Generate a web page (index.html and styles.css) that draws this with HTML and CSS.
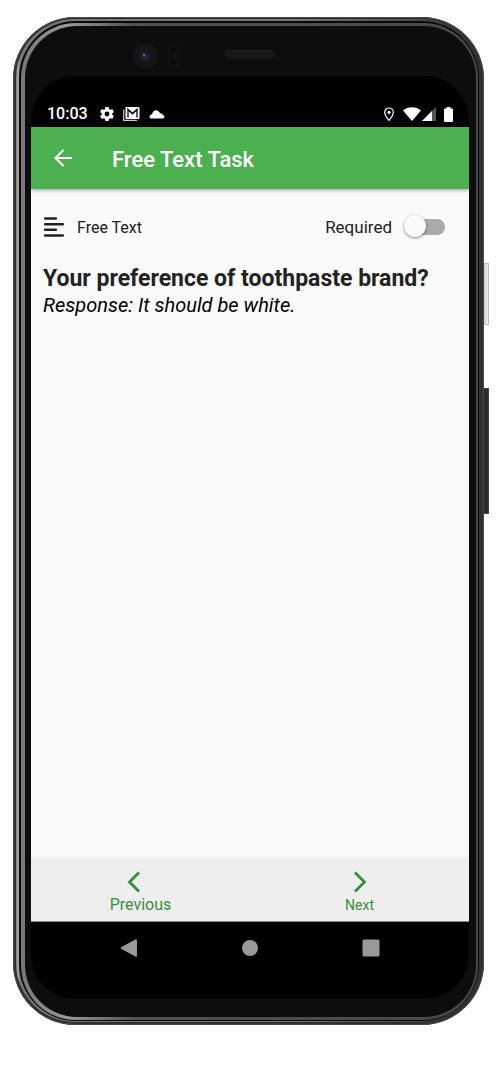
FILE: index.html
```html
<!DOCTYPE html>
<html lang="en">
<head>
<meta charset="utf-8">
<meta name="viewport" content="width=device-width, initial-scale=1">
<title>Free Text Task</title>
<link rel="stylesheet" href="styles.css">
</head>
<body>
<main class="phone">
  <span class="side-key power"></span>
  <span class="side-key volume"></span>
  <div class="ring edge"><div class="ring shine"><div class="ring groove"><div class="ring lip">
    <div class="bezel">
      <div class="sensors">
        <svg class="camera" width="48" height="26" viewBox="0 0 48 26" aria-hidden="true">
          <circle cx="13" cy="13" r="12.500" fill="#151516"/>
          <circle cx="13" cy="13" r="6" fill="#1a1a1f"/>
          <circle cx="14" cy="14" r="3.500" fill="#20243a"/>
          <circle cx="12" cy="12" r="1" fill="#888"/>
          <rect x="36" y="1" width="11" height="24" rx="5.500" fill="#111112"/>
          <circle cx="41.500" cy="7" r="3" fill="#0c0c0d"/>
          <circle cx="41.500" cy="19" r="3" fill="#0c0c0d"/>
        </svg>
        <span class="speaker"></span>
      </div>
      <div class="screen">
        <div class="status">
          <span class="clock">10:03</span>
          <svg class="gear" width="14" height="14" viewBox="2 2 20 20" aria-hidden="true"><path fill="#fff" d="M19.430 12.980c.040-.320.070-.640.070-.980s-.030-.660-.070-.980l2.110-1.650c.190-.150.240-.420.120-.640l-2-3.460c-.120-.220-.390-.300-.610-.220l-2.490 1c-.520-.400-1.080-.730-1.690-.980l-.380-2.650C14.460 2.180 14.250 2 14 2h-4c-.250 0-.460.180-.490.420l-.380 2.650c-.610.250-1.170.590-1.690.980l-2.490-1c-.230-.090-.490 0-.610.220l-2 3.460c-.130.220-.070.490.120.640l2.110 1.650c-.040.320-.070.650-.070.980s.030.660.070.980l-2.110 1.650c-.190.150-.240.420-.120.640l2 3.460c.120.220.390.300.610.220l2.490-1c.520.400 1.080.730 1.690.980l.380 2.650c.030.240.240.420.490.420h4c.250 0 .460-.180.490-.420l.380-2.650c.610-.250 1.170-.590 1.690-.980l2.490 1c.230.090.490 0 .610-.220l2-3.460c.120-.220.070-.490-.120-.640l-2.110-1.650zM12 15.500a3.500 3.500 0 1 1 0-7 3.500 3.500 0 0 1 0 7z"/></svg>
          <svg class="mail" width="17" height="14" viewBox="0 0 17 14" aria-hidden="true"><path d="M.700 2.500v10.800H14" fill="none" stroke="#ccc" stroke-width="1.200"/><rect x="2.500" width="14" height="12" rx="1" fill="#fff"/><path d="M5 10.500V2.800l4.500 4 4.500-4v7.700" fill="none" stroke="#000" stroke-width="1.300"/><path d="M4 1.200l5.500 4.300L15 1.200" fill="none" stroke="#000" stroke-width=".600"/></svg>
          <svg class="cloud" width="16" height="10" viewBox="0 0 16 10" aria-hidden="true"><path d="M2.500 9.500C-.500 9.500 0 5.500 3 5.200 4 .200 9.300-.200 11 4.200c2 0 2.600.800 2.800 1.800 2.200.300 2.100 3.500 0 3.500z" fill="#fff"/></svg>
          <svg class="pin" width="12" height="15" viewBox="0 0 12 15" aria-hidden="true"><path d="M6 1a4.300 4.300 0 0 0-4.300 4.300C1.700 8.500 6 13.400 6 13.400s4.300-4.900 4.300-8.100A4.300 4.300 0 0 0 6 1z" fill="none" stroke="#fff" stroke-width="1.200"/><circle cx="6" cy="5.300" r="1.600" fill="#fff"/></svg>
          <svg class="wifi" width="18" height="14" viewBox="0 0 18 14" aria-hidden="true"><path d="M0 3.400C5-.700 13-.700 18 3.400L9 14z" fill="#fff"/></svg>
          <svg class="signal" width="14" height="14" viewBox="0 0 14 14" aria-hidden="true"><path d="M0 14 14 0v14z" fill="#555"/><path d="M0 14 10 4v10z" fill="#fff"/></svg>
          <svg class="battery" width="9" height="15" viewBox="0 0 9 15" aria-hidden="true"><path d="M2.500 1.500V0h4v1.500H8a1 1 0 0 1 1 1V14a1 1 0 0 1-1 1H1a1 1 0 0 1-1-1V2.500a1 1 0 0 1 1-1z" fill="#fff"/></svg>
        </div>
        <header class="appbar">
          <button class="back" type="button" aria-label="Back"><svg width="18" height="18" viewBox="0 0 18 18" aria-hidden="true"><path d="M18 9H1.500M9.500 1 1.500 9l8 8" fill="none" stroke="#fff" stroke-width="2"/></svg></button>
          <h1 class="title">Free Text Task</h1>
        </header>
        <section class="content">
          <div class="meta">
            <svg width="21" height="20" viewBox="0 0 21 20" aria-hidden="true"><path d="M2.200 1.500h10.600M2.200 7.200h17.600M2.200 12.800h10.600M2.200 18.500h17.600" stroke="#222" stroke-width="2.600" stroke-linecap="round"/></svg>
            <span class="kind">Free Text</span>
            <label class="required">Required <input class="switch" type="checkbox" role="switch"></label>
          </div>
          <h2 class="question">Your preference of toothpaste brand?</h2>
          <p class="response">Response: It should be white.</p>
        </section>
        <nav class="pager" aria-label="Questions">
          <button class="page-link" type="button"><svg class="prev-icon" width="14" height="22" viewBox="0 0 14 22" aria-hidden="true"><path d="M12 1.500 2.500 11l9.500 9.500" fill="none" stroke="#388e3c" stroke-width="2.800"/></svg><span class="large">Previous</span></button>
          <button class="page-link" type="button"><svg width="14" height="22" viewBox="0 0 14 22" aria-hidden="true"><path d="M2 1.500 11.500 11 2 20.500" fill="none" stroke="#388e3c" stroke-width="2.800"/></svg><span>Next</span></button>
        </nav>
        <div class="system">
          <button class="key" type="button" aria-label="Back"><svg width="18" height="18" viewBox="0 0 18 18"><path d="M16.200 1v16L1.500 9z" fill="#999" stroke="#999" stroke-width="1.500" stroke-linejoin="round"/></svg></button>
          <button class="key" type="button" aria-label="Home"><svg width="18" height="18" viewBox="0 0 18 18"><circle cx="9" cy="9" r="8" fill="#999"/></svg></button>
          <button class="key" type="button" aria-label="Recent apps"><svg width="18" height="18" viewBox="0 0 18 18"><rect x=".500" y=".500" width="17" height="17" rx="1.500" fill="#999"/></svg></button>
        </div>
      </div>
    </div>
  </div></div></div></div>
</main>
</body>
</html>
```
FILE: styles.css
```css
* { box-sizing: border-box; }
body {
  margin: 0;
  min-height: 100vh;
  padding: 17px 16px 50px 13px;
  display: flex;
  background: #fff;
  font-family: Roboto, sans-serif;
}
button { border: 0; padding: 0; background: none; font: inherit; color: inherit; }
svg { display: block; flex: none; }
.phone { flex: 1; position: relative; display: flex; }
.side-key { position: absolute; right: -5px; width: 6px; border: 1px solid #bbb; }
.power { top: 246px; height: 62px; background: linear-gradient(90deg, #ccc, #eee); }
.volume { top: 371px; height: 126px; background: #2b2b2b; border-color: #444; }

/* Metal frame, from the outside in */
.ring { flex: 1; display: flex; position: relative; }
.edge { padding: 2px 4px 3px 3px; border-radius: 62px; background: #303030; box-shadow: inset 0 0 0 1px #484848; }
.shine { padding: 2px 1px 1px 3px; border-radius: 59px; background: linear-gradient(90deg, #777, #aaa 2px, #777 4px, #777 60%, #333); }
.groove { padding: 2px 1px 1px 2px; border-radius: 57px; background: #080808; }
.lip { padding: 3px 2px 3px 4px; border-radius: 55px; background: linear-gradient(90deg, #777, #999 10%, #505050 25%, #484848); }
.bezel {
  flex: 1;
  display: flex;
  flex-direction: column;
  padding: 0 7px 18px 6px;
  border-radius: 52px;
  background: #0d0d0f;
}
.sensors { height: 50px; display: flex; align-items: flex-start; padding: 17px 0 0 101px; gap: 45px; }
.speaker { width: 50px; height: 9px; margin-top: 7px; border-radius: 5px; background: #171717; border-top: 1px solid #222; }
.screen { flex: 1; display: flex; flex-direction: column; border-radius: 44px; overflow: hidden; background: #000; }
.status { height: 51px; display: flex; align-items: center; padding: 25px 16px 0 16px; color: #fff; }
.clock { font-size: 16px; font-weight: 500; line-height: 20px; }
.gear { margin-left: 12px; }
.mail { margin-left: 9px; }
.cloud { margin-left: 9px; }
.pin { margin-left: auto; }
.wifi { margin-left: 8px; }
.signal { margin-left: 1px; }
.battery { margin-left: 8px; }
.appbar {
  height: 62px;
  display: flex;
  align-items: center;
  gap: 40px;
  padding: 0 23px;
  background: #4caf50;
  color: #fff;
  position: relative;
  box-shadow: 0 1px 4px #0006;
}
.title { margin: 0; padding-top: 3px; font-size: 22px; font-weight: 500; line-height: 28px; }
.content { flex: 1; padding: 22px 12px; background: #fafafa; color: #222; }
.meta { display: flex; align-items: center; gap: 13px; height: 32px; font-size: 16px; }
.required { display: flex; align-items: center; gap: 12px; margin-left: auto; padding-right: 12px; font-size: 17px; }
.switch { appearance: none; position: relative; width: 41px; height: 24px; margin: 0; }
.switch::before { content: ""; position: absolute; inset: 4px 0 4px 6px; border-radius: 8px; background: #aaa; }
.switch::after { content: ""; position: absolute; left: 0; top: 0; width: 22px; height: 22px; border-radius: 50%; background: #fafafa; box-shadow: 0 1px 3px #0007; }
.switch:checked::after { left: 19px; }
.question { margin: 23px 0 0; font-size: 23px; font-weight: 700; line-height: 26px; }
.response { margin: 0; font-size: 20px; font-style: italic; line-height: 26px; color: #000; }
.pager { height: 63px; display: flex; background: #eee; border-bottom: 1px solid #888; box-shadow: 0 -1px 2px #0001; }
.page-link { flex: 1; display: flex; flex-direction: column; align-items: center; padding-top: 12px; color: #388e3c; font-size: 14px; line-height: 24px; }
.prev-icon { margin-right: 14px; }
.large { font-size: 16px; }
.system { height: 77px; display: flex; justify-content: space-between; padding: 17px 89px 0; }
.key { height: 18px; }
```
